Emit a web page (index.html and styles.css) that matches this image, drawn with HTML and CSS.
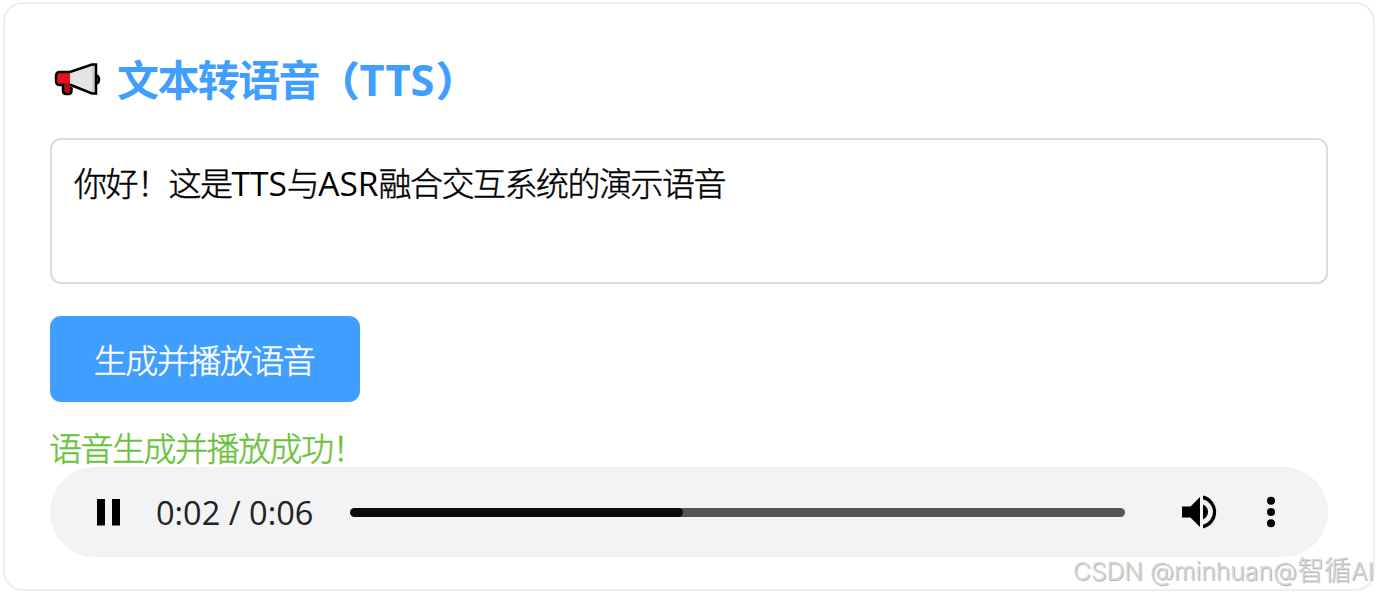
FILE: index.html
```html
<!DOCTYPE html>
<html lang="zh-CN">
<head>
<meta charset="utf-8">
<title>文本转语音（TTS）</title>
<link rel="stylesheet" href="styles.css">
</head>
<body>
<main class="card">
  <h2 class="title">
    <svg class="megaphone" viewBox="0 0 48 36" aria-hidden="true">
      <path d="M40 13q5 0 5 4.500t-5 4.500z" fill="#777" stroke="#000" stroke-width="2.500"/>
      <path d="M9 22v6.500q0 3.500 3 3.500h2.500q3 0 3-3.500V22z" fill="#a90f1b" stroke="#000" stroke-width="2.500"/>
      <path d="M16 10L38 2.500h4v29h-4L16 24.500z" fill="#e4e4e4"/>
      <path d="M38 3h3v29h-3z" fill="#ccc"/>
      <path d="M16 10H6q-4 0-4 4v5q0 4 4 4h10z" fill="#e81123"/>
      <path d="M16 10H6q-4 0-4 4v5q0 4 4 4h11L38 31.500h4V2.500h-4z" fill="none" stroke="#000" stroke-width="2.500"/>
      <path d="M10.250 21.500h6v4h-6z" fill="#a90f1b"/>
    </svg>
    <span class="title-text">文本转语音<span class="paren">（</span><span class="title-latin">TTS</span><span class="paren close">）</span></span>
  </h2>
  <div class="textarea"><span class="cjk">你好！这是</span><span class="latin">TTS</span><span class="cjk">与</span><span class="latin">ASR</span><span class="cjk">融合交互系统的演示语音</span></div>
  <button class="generate cjk">生成并播放语音</button>
  <div class="status cjk">语音生成并播放成功！</div>
  <div class="player">
    <svg class="pause" viewBox="0 0 24 28" aria-hidden="true"><path d="M0 1h8v26.500H0zM15 1h8v26.500h-8z"/></svg>
    <span class="time">0:02 / 0:06</span>
    <div class="track"><div class="played"></div></div>
    <svg class="volume" viewBox="0 0 36 34" aria-hidden="true">
      <path d="M0 11.500h8.500L18 2v30l-9.500-9.500H0z"/>
      <path d="M21 9.500q5 2.500 5 7.500t-5 7.500z"/>
      <path d="M21 .6a16.800 16.800 0 0 1 0 32.800v-3.600a13.200 13.200 0 0 0 0-25.600z"/>
    </svg>
    <svg class="more" viewBox="0 0 8 32" aria-hidden="true"><circle cx="4" cy="4.700" r="4"/><circle cx="4" cy="16" r="4"/><circle cx="4" cy="27.300" r="4"/></svg>
  </div>
  <div class="watermark">CSDN @minhuan@<span class="watermark-cjk">智循</span>AI</div>
</main>
</body>
</html>
```
FILE: styles.css
```css
* { box-sizing: border-box; }
body {
  margin: 0;
  background: #fff;
  color: #000;
  font-family: "Open Sans", "Noto Sans CJK SC", sans-serif;
  overflow: hidden;
}
.card {
  position: relative;
  width: 1372px;
  height: 589px;
  margin: 2px 0 0 3px;
  padding: 44px 45px 0;
  border: 2px solid #eee;
  border-radius: 20px;
}
.title {
  display: flex;
  align-items: center;
  height: 60px;
  margin: 0 0 30px;
  color: #409eff;
  font: bold 42px/60px "Noto Sans CJK SC", sans-serif;
}
.megaphone { width: 48px; height: 36px; margin: 3px 0 0 4px; }
.title-text { margin-left: 15px; letter-spacing: -1.6px; white-space: nowrap; }
.title-latin { display: inline-block; margin: -2px 0 0 2px; line-height: 56px; font-family: "Noto Sans", sans-serif; font-size: 43.500px; letter-spacing: 0; }
.paren { font-size: 40px; -webkit-text-stroke: 1px #409eff; }
.close { margin-left: 2px; }
.cjk {
  font-family: "Noto Sans CJK SC", sans-serif;
  font-size: 33px;
  font-weight: 300;
  letter-spacing: -1.5px;
  -webkit-text-stroke: .45px currentColor;
}
.textarea {
  height: 146px;
  padding: 18px 22px;
  border: 2px solid #dcdcdc;
  border-radius: 11px;
  line-height: 48px;
}
.latin { font-size: 33.500px; }
.generate {
  display: block;
  width: 310px;
  height: 86px;
  margin: 32px 0 0;
  padding: 0 2px 0 0;
  border: 0;
  border-radius: 11px;
  background: #409eff;
  color: #fff;
}
.status { height: 45px; margin: 20px 0 0 -1px; color: #67c23a; line-height: 51px; }
.player {
  display: flex;
  align-items: center;
  height: 90px;
  padding: 0 53.500px 0 47px;
  border-radius: 45px;
  background: #f1f3f4;
}
.pause { width: 24px; height: 28px; }
.time { width: 194px; padding-left: 35px; color: #222; font-size: 32.500px; white-space: nowrap; }
.track { flex: 0 0 775px; margin-left: 35px; height: 9px; border-radius: 5px; background: #555; overflow: hidden; }
.played { width: 333px; height: 9px; border-radius: 5px; background: #0b0b0b; }
.volume { width: 36px; height: 34px; margin-left: auto; }
.more { width: 8px; height: 32px; margin-left: 49px; }
.watermark {
  position: absolute;
  right: -1px;
  bottom: 0;
  color: #d6d6d6;
  font: 300 24.700px/36px Inter, sans-serif;
  text-shadow: 1px 1px 1px #aaa;
  white-space: nowrap;
}
.watermark-cjk { font-family: "Noto Sans CJK SC", sans-serif; font-size: 27px; }
```
